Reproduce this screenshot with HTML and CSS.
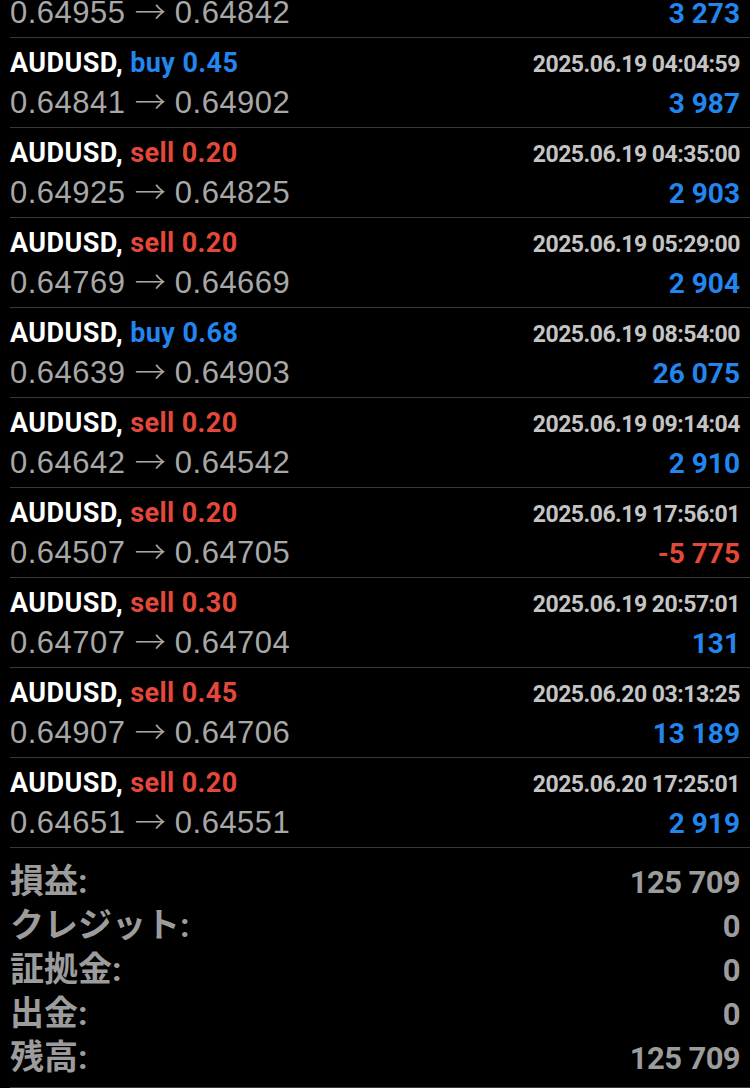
FILE: index.html
```html
<!DOCTYPE html>
<html lang="ja">
<head>
    <meta charset="UTF-8">
    <meta name="viewport" content="width=device-width, initial-scale=1.0">
    <title>取引履歴</title>
    <link rel="stylesheet" href="styles.css">
</head>
<body>
    <div class="history">
        <div class="deal">
            <div class="deal-top">
                <span class="title">AUDUSD, <span class="sell">sell 0.20</span></span>
                <span class="date">2025.06.19 03:20:00</span>
            </div>
            <div class="deal-bottom">
                <span class="prices">0.64955 <span class="arrow">→</span> 0.64842</span>
                <span class="profit">3 273</span>
            </div>
        </div>

        <div class="deal">
            <div class="deal-top">
                <span class="title">AUDUSD, <span class="buy">buy 0.45</span></span>
                <span class="date">2025.06.19 04:04:59</span>
            </div>
            <div class="deal-bottom">
                <span class="prices">0.64841 <span class="arrow">→</span> 0.64902</span>
                <span class="profit">3 987</span>
            </div>
        </div>

        <div class="deal">
            <div class="deal-top">
                <span class="title">AUDUSD, <span class="sell">sell 0.20</span></span>
                <span class="date">2025.06.19 04:35:00</span>
            </div>
            <div class="deal-bottom">
                <span class="prices">0.64925 <span class="arrow">→</span> 0.64825</span>
                <span class="profit">2 903</span>
            </div>
        </div>

        <div class="deal">
            <div class="deal-top">
                <span class="title">AUDUSD, <span class="sell">sell 0.20</span></span>
                <span class="date">2025.06.19 05:29:00</span>
            </div>
            <div class="deal-bottom">
                <span class="prices">0.64769 <span class="arrow">→</span> 0.64669</span>
                <span class="profit">2 904</span>
            </div>
        </div>

        <div class="deal">
            <div class="deal-top">
                <span class="title">AUDUSD, <span class="buy">buy 0.68</span></span>
                <span class="date">2025.06.19 08:54:00</span>
            </div>
            <div class="deal-bottom">
                <span class="prices">0.64639 <span class="arrow">→</span> 0.64903</span>
                <span class="profit">26 075</span>
            </div>
        </div>

        <div class="deal">
            <div class="deal-top">
                <span class="title">AUDUSD, <span class="sell">sell 0.20</span></span>
                <span class="date">2025.06.19 09:14:04</span>
            </div>
            <div class="deal-bottom">
                <span class="prices">0.64642 <span class="arrow">→</span> 0.64542</span>
                <span class="profit">2 910</span>
            </div>
        </div>

        <div class="deal">
            <div class="deal-top">
                <span class="title">AUDUSD, <span class="sell">sell 0.20</span></span>
                <span class="date">2025.06.19 17:56:01</span>
            </div>
            <div class="deal-bottom">
                <span class="prices">0.64507 <span class="arrow">→</span> 0.64705</span>
                <span class="profit loss">-5 775</span>
            </div>
        </div>

        <div class="deal">
            <div class="deal-top">
                <span class="title">AUDUSD, <span class="sell">sell 0.30</span></span>
                <span class="date">2025.06.19 20:57:01</span>
            </div>
            <div class="deal-bottom">
                <span class="prices">0.64707 <span class="arrow">→</span> 0.64704</span>
                <span class="profit">131</span>
            </div>
        </div>

        <div class="deal">
            <div class="deal-top">
                <span class="title">AUDUSD, <span class="sell">sell 0.45</span></span>
                <span class="date">2025.06.20 03:13:25</span>
            </div>
            <div class="deal-bottom">
                <span class="prices">0.64907 <span class="arrow">→</span> 0.64706</span>
                <span class="profit">13 189</span>
            </div>
        </div>

        <div class="deal">
            <div class="deal-top">
                <span class="title">AUDUSD, <span class="sell">sell 0.20</span></span>
                <span class="date">2025.06.20 17:25:01</span>
            </div>
            <div class="deal-bottom">
                <span class="prices">0.64651 <span class="arrow">→</span> 0.64551</span>
                <span class="profit">2 919</span>
            </div>
        </div>

        <div class="summary">
            <div class="summary-row"><span class="label">損益:</span><span>125 709</span></div>
            <div class="summary-row"><span class="label">クレジット:</span><span>0</span></div>
            <div class="summary-row"><span class="label">証拠金:</span><span>0</span></div>
            <div class="summary-row"><span class="label">出金:</span><span>0</span></div>
            <div class="summary-row"><span class="label">残高:</span><span>125 709</span></div>
        </div>
    </div>
</body>
</html>
```

FILE: styles.css
```css
* {
    margin: 0;
    padding: 0;
    box-sizing: border-box;
}

body {
    background-color: #000;
    overflow: hidden;
    font-family: Roboto, 'Noto Sans CJK JP', sans-serif;
}

/* list is scrolled: first deal is cut at the top */
.history {
    margin-top: -52px;
    margin-left: 10px;
}

.deal {
    height: 90px;
    padding: 5px 10px 0 0;
    border-bottom: 1px solid #383838;
}

.deal-top,
.deal-bottom {
    display: flex;
    justify-content: space-between;
    align-items: baseline;
    height: 40px;
    line-height: 40px;
}

.title {
    font-size: 27px;
    font-weight: 700;
    color: #fff;
    letter-spacing: 0.4px;
}

.buy {
    color: #2385ee;
}

.sell {
    color: #e4483a;
}

.date {
    font-size: 23px;
    font-weight: 700;
    color: #c4c4c4;
    letter-spacing: -0.5px;
}

.prices {
    font-family: 'Liberation Sans', sans-serif;
    font-size: 31px;
    color: #a8a8a8;
    letter-spacing: 0.5px;
}

.arrow {
    font-family: 'Noto Sans CJK JP', sans-serif;
    font-weight: 300;
    letter-spacing: 0;
    line-height: 0;
}

.profit {
    font-size: 28px;
    font-weight: 700;
    color: #2385ee;
}

.profit.loss {
    color: #e4483a;
}

.summary {
    padding: 11px 10px 8px 0;
    border-bottom: 1px solid #383838;
}

.summary-row {
    display: flex;
    justify-content: space-between;
    align-items: baseline;
    height: 44px;
    line-height: 44px;
    font-size: 31px;
    font-weight: 700;
    color: #9c9c9c;
    letter-spacing: -0.6px;
}

.label {
    font-size: 34px;
    letter-spacing: 0;
}
```
